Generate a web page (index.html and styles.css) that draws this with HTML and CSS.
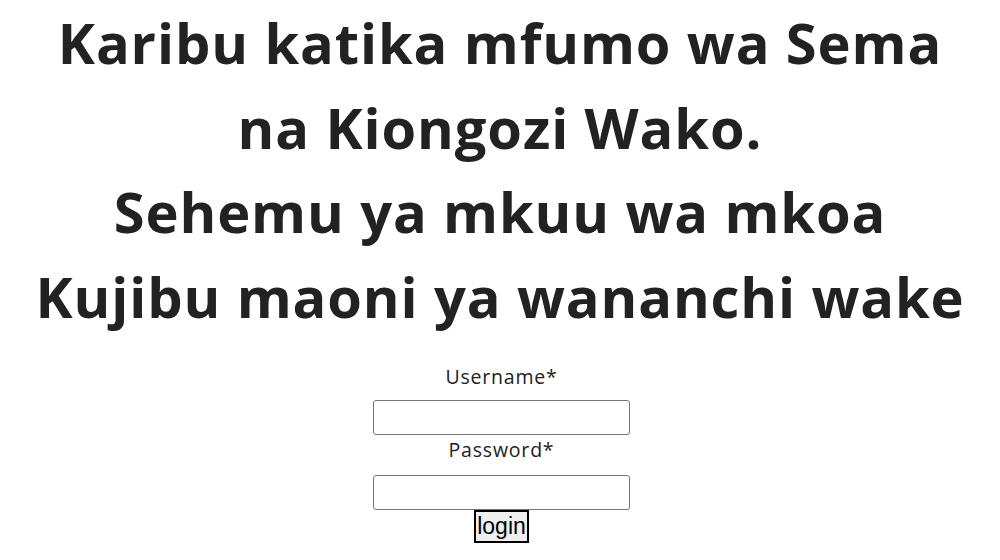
FILE: index.html
```html
<!DOCTYPE html>
<html lang="sw">
<head>
<meta charset="utf-8">
<title>Sema na Kiongozi Wako</title>
<link rel="stylesheet" href="styles.css">
</head>
<body>
<main class="page">
  <h1 class="title">Karibu katika mfumo wa Sema<br>na Kiongozi Wako.<br>Sehemu ya mkuu wa mkoa<br>Kujibu maoni ya wananchi wake</h1>
  <form class="login-form">
    <label class="field-label" for="username">Username*</label>
    <input class="field-input" id="username" type="text">
    <label class="field-label field-label--second" for="password">Password*</label>
    <input class="field-input field-input--second" id="password" type="password">
    <button class="login-btn" type="button">login</button>
  </form>
</main>
</body>
</html>
```

FILE: styles.css
```css
html, body {
  margin: 0;
  padding: 0;
  background: #ffffff;
}

.page {
  display: flex;
  flex-direction: column;
  align-items: center;
  color: #222222;
  font-family: "Open Sans", "Liberation Sans", sans-serif;
}

.title {
  margin: 0;
  font-size: 56px;
  font-weight: 700;
  line-height: 84.7px;
  text-align: center;
  letter-spacing: 0.9px;
}

.login-form {
  display: flex;
  flex-direction: column;
  align-items: center;
  margin-top: 23px;
  padding-left: 3px;
}

.field-label {
  font-size: 19.5px;
  line-height: 30px;
  letter-spacing: 0.8px;
  margin-bottom: 8px;
  color: #222222;
}

.field-label--second {
  margin-bottom: 10px;
}

.field-input {
  box-sizing: border-box;
  width: 257px;
  height: 35px;
  margin: 0;
  border: 1px solid #767676;
  border-radius: 3px;
  background: #ffffff;
}

.login-btn {
  margin: 0;
  padding: 1px 1px;
  border: 2px solid #000000;
  background: #efefef;
  color: #000000;
  font-family: "Liberation Sans", Arial, sans-serif;
  font-size: 23px;
  line-height: 27px;
}
```
